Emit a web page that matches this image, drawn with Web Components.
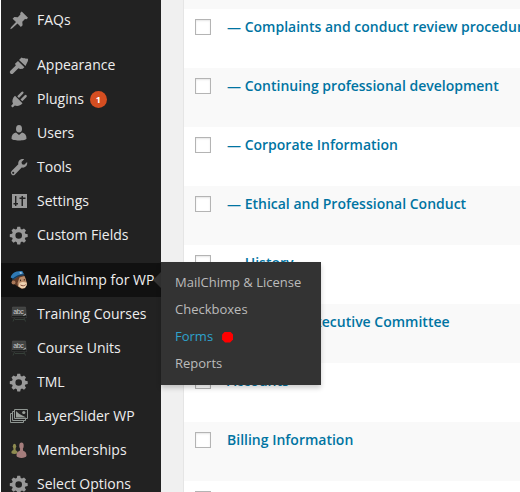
<!DOCTYPE html>
<html lang="en">
<head>
<meta charset="utf-8">
<title>Pages</title>
<style>
html,body{margin:0;height:100%;overflow:hidden;background:#fff}
body{font-family:"Open Sans","Noto Sans",sans-serif}
</style>
</head>
<body>
<admin-screen>
  <admin-menu slot="menu">
    <menu-item icon="pin">FAQs</menu-item>
    <menu-item icon="brush" gap>Appearance</menu-item>
    <menu-item icon="plug" count="1">Plugins</menu-item>
    <menu-item icon="user">Users</menu-item>
    <menu-item icon="wrench">Tools</menu-item>
    <menu-item icon="sliders">Settings</menu-item>
    <menu-item icon="gear">Custom Fields</menu-item>
    <menu-item icon="chimp" gap open>MailChimp for WP
      <fly-out slot="sub">
        <fly-item>MailChimp &amp; License</fly-item>
        <fly-item>Checkboxes</fly-item>
        <fly-item current>Forms</fly-item>
        <fly-item>Reports</fly-item>
      </fly-out>
    </menu-item>
    <menu-item icon="board">Training Courses</menu-item>
    <menu-item icon="board">Course Units</menu-item>
    <menu-item icon="gear">TML</menu-item>
    <menu-item icon="layers">LayerSlider WP</menu-item>
    <menu-item icon="members">Memberships</menu-item>
    <menu-item icon="gear">Select Options</menu-item>
  </admin-menu>
  <page-table>
    <page-row>— Complaints and conduct review procedures</page-row>
    <page-row>— Continuing professional development</page-row>
    <page-row>— Corporate Information</page-row>
    <page-row>— Ethical and Professional Conduct</page-row>
    <page-row>— History</page-row>
    <page-row>— National Executive Committee</page-row>
    <page-row>Accounts</page-row>
    <page-row>Billing Information</page-row>
    <page-row></page-row>
  </page-table>
</admin-screen>
<script>
const ICONS = {
  pin:'<path fill="#999" d="M12.700 1.600l6.300 6.200-1.400 1.400-1.600-.2-2.700 2.800.3 3.400-1.700 1.700-3.400-3.400L3 18.400l-1.800.8.8-1.900 5-5.300L3.600 8.700l1.700-1.600 3.500.2 2.600-2.700-.2-1.500z"/>',
  brush:'<g fill="#999"><path d="M9 5.900l6.400 6.400-1.600 1.500-2.600.2-1.800-.8-5.300 5.200a1.800 1.800 0 0 1-2.700-2.700L6.800 10.500 6 8.800z"/><path d="M10 5l2.500-2.500 1.700.8.9-.4 1 .7 3 .2-.2 2.300-2.400 5z"/></g>',
  plug:'<g fill="#999"><path d="M6 6.700l7.500 7.500c-2.200 2.500-5.200 3.300-7.700 2.200L3.700 18.500 2 16.900l2-2.200C2.700 12.100 3.500 9 6 6.700z"/><path d="M8.200 7.300l4.200-4.400a1.200 1.200 0 0 1 1.800 1.700L10 9zM11.500 10.500l4.200-4.200a1.200 1.200 0 0 1 1.800 1.700l-4.200 4.300z"/></g>',
  user:'<g fill="#999"><ellipse cx="10" cy="5.800" rx="3" ry="3.800"/><path d="M7 9.400l3 2.600 3-2.600c3 .8 4.500 2.500 4.500 6.100 0 1.300-3.700 2-7.500 2s-7.500-.7-7.500-2c0-3.600 1.500-5.300 4.500-6.100z"/></g>',
  wrench:'<path fill="#999" fill-rule="evenodd" d="M15.200 2.200l-2.700 2.800.5 2.200 2.200.5 2.900-2.600c.7 3.400-1.800 6.200-5.400 5.400L6 17.400a2.400 2.400 0 0 1-3.400-3.400L9.300 7.300C8.700 3.700 11.800 1.300 15.200 2.200zM4.200 14.700a1.100 1.100 0 1 0 0 2.200 1.100 1.100 0 0 0 0-2.200z"/>',
  sliders:'<path fill="#999" d="M3 3h15v14H3z"/><path fill="#222" d="M6 5h1.400v7H9v1.500H7.400V15H6v-1.500H4.500V12H6zM12.500 5H14v1.500h2.500V8H14v7h-1.500V8h-2V6.500h2z"/>',
  gear:'<path fill="#999" fill-rule="evenodd" d="M8.300 1.800h2.900l.5 2.200 1.300.6 2-1.200 2 2-1.200 2 .6 1.400 2.300.4v2.800l-2.300.5-.6 1.300 1.200 2-2 2-2-1.200-1.300.6-.5 2.200H8.300l-.5-2.200-1.300-.6-2 1.200-2-2 1.200-2-.6-1.300-2.300-.5V9.200l2.300-.4.6-1.400-1.200-2 2-2 2 1.200L7.800 4zM9.700 7.200a3.300 3.300 0 1 0 0 6.600 3.300 3.300 0 0 0 0-6.600z"/>',
  chimp:'<path fill="#5f3a27" d="M4 8l10-4 2.500 4v7l-3 3-4-1-4.500-3-2-3z"/><path fill="#b98b69" d="M10.500 7.500l5-1.500 1.300 3.500 1.200 4-1.500 4-3.500 1.500-4-2.500-.5-3.500z"/><circle cx="4.500" cy="12.500" r="2" fill="#a97858"/><path fill="#efd2b1" d="M10.500 12.700l3-.8 4 .5.300 2.800-2.300 3-3.500-.3-2.500-2z"/><path fill="#2f79b4" d="M1.700 7.500C2.500 3.500 7 .5 13.500 1.200l1.500 3-4.500 1-5.500 4z"/><path stroke="#123a5c" stroke-width="1.200" fill="none" d="M3.500 9.700C6.500 6.300 10.500 5 15.500 4.900"/><path fill="#96bfdf" d="M10.500 1.900l2 .1.400 1.700-1.900.3z"/><path stroke="#37221a" d="M11.500 9.600v1.500M15.300 9.100v1.400"/><path stroke="#784332" stroke-width=".9" fill="none" d="M11.500 15c2 1.200 3.800.9 5.200-.3"/>',
  board:'<path fill="#414342" stroke="#555" stroke-width=".5" d="M3.500 3h13l1 10.500H3z"/><text x="4.200" y="9.600" font-family="Liberation Sans" font-size="7" fill="#ccc" textLength="10.500">abc</text><path d="M14.500 11.500l2.500-1.500" stroke="#bbb"/><path fill="#1b1d1c" d="M3 12h14.500v1.500H3z"/><path stroke="#364039" d="M5.500 14L4 17.500M15 14l1.500 3.500M6 15.500h9"/>',
  layers:'<g fill="#222" stroke="#8f9692" stroke-width="1"><path d="M1.500 7.500h13v9h-13z"/><path d="M3.500 5.500h13v9h-13z"/><path d="M5.500 3.500h13v9h-13z"/></g><path fill="#999f9a" d="M7 5l3 2.800 2.300 1.200 4.900 2.500H7z"/><circle cx="14.800" cy="6.500" r="1.600" fill="#999f9a"/>',
  members:'<g fill="#8e8b50"><ellipse cx="5.500" cy="6.300" rx="1.700" ry="2.600"/><path d="M4.700 8h1.600l.5 2.200c1.700.8 2.200 1.800 1.600 3.100-1.500 1-4.500 1-5.800 0-.6-1.500.3-2.500 1.700-3.200z"/></g><g fill="#a57d7c"><ellipse cx="12.500" cy="5.800" rx="2.200" ry="3.200"/><path d="M11.300 7.500h2.400l.5 3.300c2.300.8 3.400 2.200 3.300 5-.3 2.800-9.700 2.800-10 0-.1-2.800 1-4.200 3.300-5z"/></g>'
};
function define(name, markup, setup){
  const t = document.createElement('template');
  t.innerHTML = markup;
  customElements.define(name, class extends HTMLElement{
    connectedCallback(){
      if (this.shadowRoot) return;
      this.attachShadow({mode:'open'}).append(t.content.cloneNode(true));
      if (setup) setup(this, this.shadowRoot);
    }
  });
}
define('admin-screen', `<style>
:host{display:flex;height:100vh;box-sizing:border-box;padding-left:1px;background:#fff;overflow:hidden}
main{flex:1;min-width:0;background:#f0f0f0;padding-left:22px}
</style><slot name="menu"></slot><main><slot></slot></main>`);
define('admin-menu', `<style>
:host{display:block;flex:none;width:160px;padding-top:3px;background:#222;box-sizing:border-box;position:relative;z-index:2}
</style><slot></slot>`);
define('menu-item', `<style>
:host{display:flex;height:34px;align-items:center;position:relative;color:#eee;font-size:14px;line-height:18px;white-space:nowrap}
:host([gap]){margin-top:11px}
:host([open]){background:#111}
svg{flex:none;width:20px;height:20px;margin:0 8px}
b{font-size:9px;line-height:17px;width:17px;height:17px;border-radius:50%;background:#d54e21;color:#fff;text-align:center;margin-left:6px;font-weight:700}
i{display:none}
:host([open]) i{display:block;position:absolute;right:0;top:9px;border:8px solid transparent;border-left:0;border-right-color:#333}
</style><svg viewBox="0 0 20 20"></svg><span><slot></slot></span><i></i><slot name="sub"></slot>`, (el, root)=>{
  root.querySelector('svg').innerHTML = ICONS[el.getAttribute('icon')];
  if (el.hasAttribute('count')) {
    const b = document.createElement('b');
    b.textContent = el.getAttribute('count');
    root.querySelector('span').after(b);
  }
});
define('fly-out', `<style>
:host{display:block;position:absolute;left:160px;top:-1px;width:160px;height:123px;box-sizing:border-box;padding-top:6px;background:#333;box-shadow:0 3px 5px rgba(0,0,0,.2)}
</style><slot></slot>`);
define('fly-item', `<style>
:host{display:flex;align-items:center;height:27px;padding-left:14px;font-size:13px;color:#bbb}
:host([current]){color:#2ea2cc}
i{display:none;width:11px;height:11px;margin:3px 0 0 9px;background:red;clip-path:polygon(27% 0,73% 0,100% 27%,100% 73%,73% 100%,27% 100%,0 73%,0 27%)}
:host([current]) i{display:block}
</style><span><slot></slot></span><i></i>`);
define('page-table', `<style>
:host{display:block;height:100%;box-sizing:border-box;padding-top:9px;border-left:1px solid #e5e5e5;background:#f9f9f9;overflow:hidden}
</style><slot></slot>`);
define('page-row', `<style>
:host{display:flex;height:59px;box-sizing:border-box;padding:10px 0 0 11px;background:#fff;color:#0074a2;font-size:14px;font-weight:600;line-height:16px;white-space:nowrap}
:host(:nth-child(even)){background:#f9f9f9}
i{flex:none;width:16px;height:16px;box-sizing:border-box;border:1px solid #b4b4b4;background:#fff;box-shadow:inset 0 1px 2px rgba(0,0,0,.1);margin-right:16px}
</style><i></i><span><slot></slot></span>`);
</script>
</body>
</html>
